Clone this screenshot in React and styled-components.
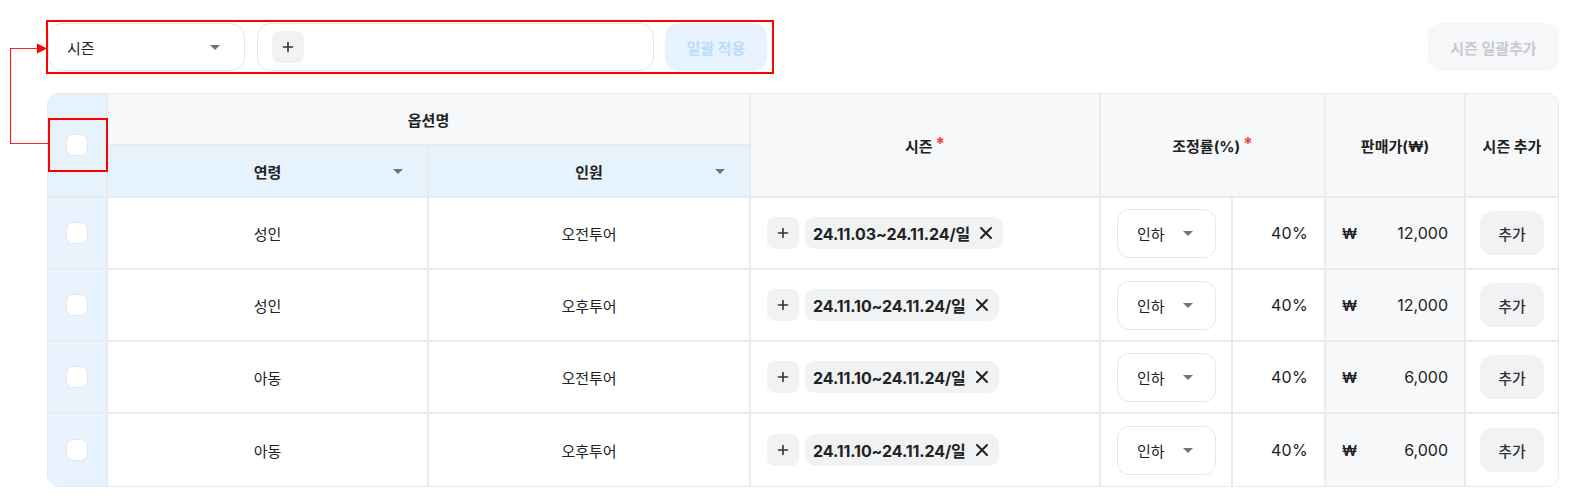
import React from 'react';
import styled, { createGlobalStyle } from 'styled-components';

const GlobalStyle = createGlobalStyle`
  html, body {
    margin: 0;
    padding: 0;
    background: #fff;
  }
  body {
    font-family: Inter, "Noto Sans CJK KR", "Noto Sans", sans-serif;
    color: #222;
  }
`;

const Page = styled.div`
  position: relative;
  width: 1569px;
  height: 498px;
  box-sizing: border-box;
  padding: 23px 10px 0 47px;
`;

const Toolbar = styled.div`
  display: flex;
  justify-content: space-between;
  align-items: center;
  height: 48px;
  padding-left: 1px;
`;

const ToolGroup = styled.div`
  display: flex;
  align-items: center;
  gap: 11px;
`;

const Caret = styled.span`
  width: 0;
  height: 0;
  border-left: 5px solid transparent;
  border-right: 5px solid transparent;
  border-top: 5.5px solid #6b7280;
`;

const SelectBox = styled.div`
  box-sizing: border-box;
  width: ${({ $w }) => $w}px;
  height: ${({ $h }) => $h}px;
  border: 1.5px solid #e3e6ea;
  border-radius: ${({ $r }) => $r || 14}px;
  background: #fff;
  display: flex;
  align-items: center;
  justify-content: space-between;
  padding: 0 ${({ $pr }) => $pr || 24}px 0 ${({ $pl }) => $pl || 18}px;
  font-size: 15px;
  color: #222;
`;

const InputBox = styled.div`
  box-sizing: border-box;
  width: 397px;
  height: 48px;
  border: 1.5px solid #e3e6ea;
  border-radius: 14px;
  display: flex;
  align-items: center;
  padding-left: 14px;
  margin-left: 1px;
`;

const PlusButton = styled.span`
  width: 32px;
  height: 32px;
  border-radius: 8px;
  background: #f1f2f4;
  display: inline-flex;
  align-items: center;
  justify-content: center;
  flex: none;
`;

const ToolButton = styled.button`
  box-sizing: border-box;
  width: ${({ $w }) => $w}px;
  height: 48px;
  border: none;
  border-radius: 14px;
  background: ${({ $variant }) => ($variant === 'blue' ? '#e7f3fe' : '#f6f7f9')};
  color: ${({ $variant }) => ($variant === 'blue' ? '#bcdcf8' : '#c6cacf')};
  font-family: inherit;
  font-size: 15px;
  font-weight: 700;
  padding: 0;
`;

const TableWrap = styled.div`
  margin-top: 22px;
  border: 1.5px solid #e6e9ec;
  border-radius: 12px;
  overflow: hidden;
  width: 1512px;
  box-sizing: border-box;
`;

const Table = styled.table`
  width: 100%;
  table-layout: fixed;
  border-collapse: separate;
  border-spacing: 0;
`;

const Th = styled.th`
  height: ${({ $h }) => $h || 50}px;
  padding: 0;
  font-size: 15px;
  font-weight: 700;
  color: #222;
  background: ${({ $blue }) => ($blue ? '#e6f2fc' : '#f7f8fa')};
  border-right: ${({ $last }) => ($last ? 'none' : '2px solid #e9ecef')};
  border-bottom: 2px solid #e9ecef;
  box-sizing: border-box;
  text-align: center;
  vertical-align: middle;
`;

const SortHead = styled.div`
  display: flex;
  align-items: center;
  justify-content: center;
  position: relative;
  span:last-child {
    position: absolute;
    right: 24px;
    top: 50%;
    margin-top: -2px;
  }
`;

const Req = styled.span`
  color: #f04438;
  font-size: 17px;
  margin-left: 3px;
  position: relative;
  top: -2px;
`;

const Td = styled.td`
  height: 72px;
  padding: 0;
  font-size: 15px;
  color: #222;
  background: ${({ $bg }) => $bg || '#fff'};
  border-right: ${({ $last }) => ($last ? 'none' : '2px solid #e9ecef')};
  border-bottom: ${({ $lastRow }) => ($lastRow ? 'none' : '2px solid #e9ecef')};
  text-align: ${({ $align }) => $align || 'center'};
  vertical-align: middle;
  box-sizing: border-box;
`;

const Checkbox = styled.span`
  display: inline-block;
  width: 22px;
  height: 22px;
  box-sizing: border-box;
  border: 1.5px solid #e3e6ea;
  border-radius: 7px;
  background: #fff;
  vertical-align: middle;
`;

const SeasonWrap = styled.div`
  display: flex;
  align-items: center;
  gap: 6px;
  padding-left: 16px;
`;

const Chip = styled.span`
  height: 32px;
  border-radius: 10px;
  background: #f1f2f4;
  display: inline-flex;
  align-items: center;
  gap: 9px;
  padding: 0 10px 0 8px;
  font-size: 16px;
  font-weight: 700;
  color: #222;
  letter-spacing: -0.1px;
`;

const PriceCell = styled.div`
  display: flex;
  justify-content: space-between;
  align-items: center;
  padding: 0 16px;
  font-size: 16px;
`;

const Won = styled.span`
  font-weight: 600;
  font-size: 15px;
`;

const Pct = styled.div`
  padding-right: 16px;
  font-size: 16px;
  letter-spacing: 0.3px;
`;

const SelectCellInner = styled.div`
  padding-left: 16px;
`;

const AddButton = styled.button`
  width: 64px;
  height: 44px;
  border: none;
  border-radius: 12px;
  background: #f1f2f4;
  font-family: inherit;
  font-size: 15px;
  font-weight: 500;
  color: #333;
  padding: 0;
`;

const RedBox = styled.div`
  position: absolute;
  left: ${({ $x }) => $x}px;
  top: ${({ $y }) => $y}px;
  width: ${({ $w }) => $w}px;
  height: ${({ $h }) => $h}px;
  border: 2px solid #ff0000;
  box-sizing: border-box;
  pointer-events: none;
`;

const Connector = styled.svg`
  position: absolute;
  left: 0;
  top: 0;
  pointer-events: none;
`;

const PlusIcon = () => (
  <svg width="12" height="12" viewBox="0 0 12 12">
    <path d="M6 1.5v9M1.5 6h9" stroke="#333" strokeWidth="1.6" strokeLinecap="round" />
  </svg>
);

const CloseIcon = () => (
  <svg width="14" height="14" viewBox="0 0 14 14">
    <path d="M2 2l10 10M12 2L2 12" stroke="#222" strokeWidth="2" strokeLinecap="round" />
  </svg>
);

const rows = [
  { age: '성인', tour: '오전투어', season: '24.11.03~24.11.24/일', price: '12,000' },
  { age: '성인', tour: '오후투어', season: '24.11.10~24.11.24/일', price: '12,000' },
  { age: '아동', tour: '오전투어', season: '24.11.10~24.11.24/일', price: '6,000' },
  { age: '아동', tour: '오후투어', season: '24.11.10~24.11.24/일', price: '6,000' },
];

export default function App() {
  return (
    <Page>
      <GlobalStyle />
      <Toolbar>
        <ToolGroup>
          <SelectBox $w={197} $h={48}>
            <span>시즌</span>
            <Caret />
          </SelectBox>
          <InputBox>
            <PlusButton>
              <PlusIcon />
            </PlusButton>
          </InputBox>
          <ToolButton $variant="blue" $w={102}>일괄 적용</ToolButton>
        </ToolGroup>
        <ToolButton $w={131}>시즌 일괄추가</ToolButton>
      </Toolbar>

      <TableWrap>
        <Table>
          <colgroup>
            <col style={{ width: 60 }} />
            <col style={{ width: 321 }} />
            <col style={{ width: 322 }} />
            <col style={{ width: 350 }} />
            <col style={{ width: 132 }} />
            <col style={{ width: 93 }} />
            <col style={{ width: 140 }} />
            <col />
          </colgroup>
          <thead>
            <tr>
              <Th rowSpan={2} $blue>
                <Checkbox />
              </Th>
              <Th colSpan={2} $h={52}>옵션명</Th>
              <Th rowSpan={2}>
                시즌<Req>*</Req>
              </Th>
              <Th rowSpan={2} colSpan={2}>
                조정률(%)<Req>*</Req>
              </Th>
              <Th rowSpan={2}>판매가(₩)</Th>
              <Th rowSpan={2} $last>시즌 추가</Th>
            </tr>
            <tr>
              <Th $blue $h={52}>
                <SortHead>
                  <span>연령</span>
                  <Caret />
                </SortHead>
              </Th>
              <Th $blue $h={52}>
                <SortHead>
                  <span>인원</span>
                  <Caret />
                </SortHead>
              </Th>
            </tr>
          </thead>
          <tbody>
            {rows.map((r, i) => {
              const lastRow = i === rows.length - 1;
              return (
                <tr key={i}>
                  <Td $bg="#e8f3fd" $lastRow={lastRow}>
                    <Checkbox />
                  </Td>
                  <Td $lastRow={lastRow}>{r.age}</Td>
                  <Td $lastRow={lastRow}>{r.tour}</Td>
                  <Td $lastRow={lastRow} $align="left">
                    <SeasonWrap>
                      <PlusButton>
                        <PlusIcon />
                      </PlusButton>
                      <Chip>
                        {r.season}
                        <CloseIcon />
                      </Chip>
                    </SeasonWrap>
                  </Td>
                  <Td $lastRow={lastRow} $align="left">
                    <SelectCellInner>
                      <SelectBox $w={99} $h={49} $r={12} $pl={19} $pr={22}>
                        <span>인하</span>
                        <Caret />
                      </SelectBox>
                    </SelectCellInner>
                  </Td>
                  <Td $lastRow={lastRow} $align="right">
                    <Pct>40%</Pct>
                  </Td>
                  <Td $lastRow={lastRow} $bg="#f7f8fa">
                    <PriceCell>
                      <Won>₩</Won>
                      <span>{r.price}</span>
                    </PriceCell>
                  </Td>
                  <Td $lastRow={lastRow} $last>
                    <AddButton>추가</AddButton>
                  </Td>
                </tr>
              );
            })}
          </tbody>
        </Table>
      </TableWrap>

      <RedBox $x={46} $y={20} $w={728} $h={54} />
      <RedBox $x={48} $y={118} $w={60} $h={54} />
      <Connector width="60" height="160">
        <polyline points="48,143.5 10.5,143.5 10.5,48.5 38,48.5" fill="none" stroke="#ff2020" strokeWidth="1.2" />
        <polygon points="37,43.5 47,48.5 37,53.5" fill="#ff0000" />
      </Connector>
    </Page>
  );
}
